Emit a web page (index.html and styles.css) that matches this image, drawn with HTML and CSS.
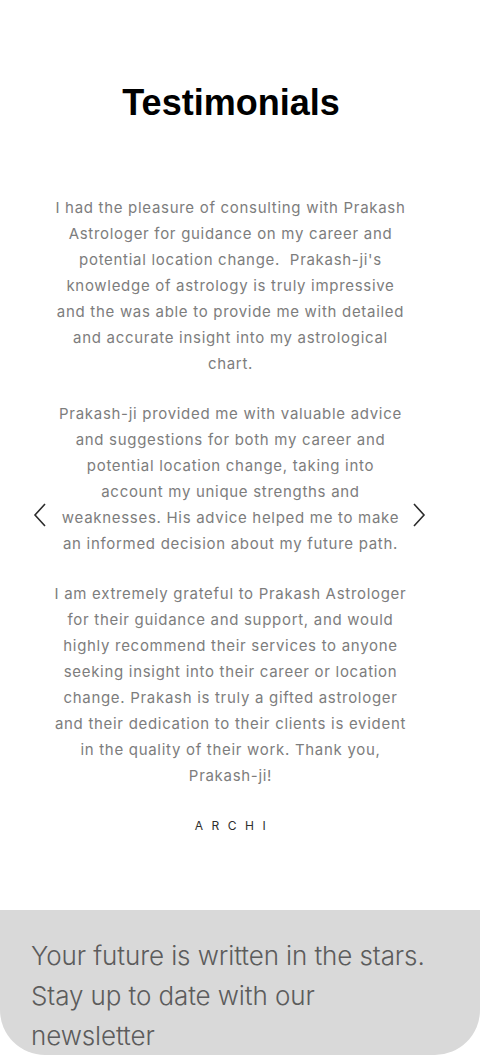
FILE: index.html
```html
<!DOCTYPE html>
<html>
	<head>
		<meta charset="UTF-8">
		<title>Testimonials</title>
		<link rel="stylesheet" href="styles.css">
	</head>
	<body>
	<div class="page">

	    <div class="testimonials">
	        <h2 class="title">Testimonials</h2>

	        <div class="slider">
	            <a class="arrow" href="javascript:;">
	                <svg width="14" height="24" viewBox="0 0 14 24"><polyline points="12,1 2,12 12,23" fill="none" stroke="#2b2b2b" stroke-width="1.6"/></svg>
	            </a>
	            <div class="slide">
	                <p>I had the pleasure of consulting with Prakash Astrologer for guidance on my career and potential location change.&nbsp; Prakash-ji's knowledge of astrology is truly impressive and the was able to provide me with detailed and accurate insight into my astrological chart.</p>
	                <p>Prakash-ji provided me with valuable advice and suggestions for both my career and potential location change, taking into account my unique strengths and weaknesses. His advice helped me to make an informed decision about my future path.</p>
	                <p>I am extremely grateful to Prakash Astrologer for their guidance and support, and would highly recommend their services to anyone seeking insight into their career or location change. Prakash is truly a gifted astrologer and their dedication to their clients is evident in the quality of their work. Thank you, Prakash-ji!</p>
	                <div class="name">ARCHI</div>
	            </div>
	            <a class="arrow" href="javascript:;">
	                <svg width="14" height="24" viewBox="0 0 14 24"><polyline points="2,1 12,12 2,23" fill="none" stroke="#2b2b2b" stroke-width="1.6"/></svg>
	            </a>
	        </div>
	    </div>

	    <div class="newsletter">
	        <p>Your future is written in the stars. Stay up to date with our newsletter</p>
	    </div>

	</div>
	</body>
</html>
```

FILE: styles.css
```css
body{
    margin:0;
    background-color:#fff;
    font-family:Inter,"Noto Sans",sans-serif;
}
.page{
    width:480px;
}
.testimonials{
    padding:81px 0 76px 33px;
}
.title{
    margin:0 0 70px;
    width:396px;
    text-align:center;
    font-family:"Liberation Sans",Arial,sans-serif;
    font-size:36px;
    line-height:44px;
    font-weight:bold;
    color:#000;
}
.slider{
    display:flex;
    align-items:center;
}
.arrow{
    display:flex;
    flex:none;
}
.slide{
    width:353px;
    margin:0 5px 0 7px;
    text-align:center;
}
.slide p{
    margin:0 0 24px;
    font-size:15px;
    line-height:26px;
    letter-spacing:0.7px;
    color:#7d7d7d;
}
.slide p:last-of-type{
    margin-bottom:29px;
}
.name{
    font-size:12px;
    line-height:16px;
    letter-spacing:8.5px;
    padding-left:8px;
    color:#2e2e2e;
}
.newsletter{
    background-color:#d9d9d9;
    height:145px;
    padding:26px 49px 0 31px;
    box-sizing:border-box;
    border-radius:0 0 45px 45px;
    overflow:hidden;
}
.newsletter p{
    margin:0;
    font-size:26px;
    line-height:40px;
    font-weight:300;
    letter-spacing:-0.1px;
    color:#5c5c5c;
}
```
